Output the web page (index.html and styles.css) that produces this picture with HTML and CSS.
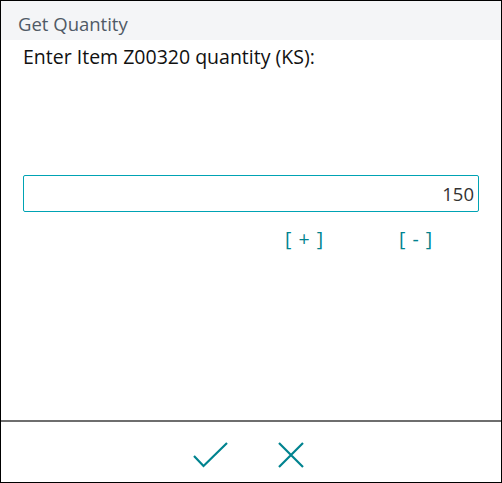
FILE: index.html
```html
<!DOCTYPE html>
<html lang="en">
<head>
  <meta charset="UTF-8">
  <meta name="viewport" content="width=device-width, initial-scale=1.0">
  <link rel="stylesheet" href="styles.css">
</head>
<body>
  <div class="dialog">
    <!-- header -->
    <div class="dialog-header">Get Quantity</div>

    <!-- body -->
    <div class="dialog-body">
      <div class="prompt">Enter Item Z00320 quantity (KS):</div>
      <input class="qty-input" type="text" value="150">
      <div class="step-row">
        <button class="step-btn">[ + ]</button>
        <button class="step-btn">[ - ]</button>
      </div>
    </div>

    <!-- footer -->
    <div class="dialog-footer">
      <button class="icon-btn" aria-label="OK">
        <svg width="35" height="26" viewBox="0 0 35 26">
          <path d="M1 14 L10.5 24 L34 1" fill="none" stroke="#00838f" stroke-width="2.2"/>
        </svg>
      </button>
      <button class="icon-btn" aria-label="Cancel">
        <svg width="26" height="26" viewBox="0 0 26 26">
          <path d="M1 1 L25 25 M25 1 L1 25" fill="none" stroke="#00838f" stroke-width="2.2"/>
        </svg>
      </button>
    </div>
  </div>
</body>
</html>
```

FILE: styles.css
```css
* {
  margin: 0;
  padding: 0;
  box-sizing: border-box;
}

body {
  width: 502px;
  height: 483px;
  font-family: "Open Sans", "Noto Sans", sans-serif;
  background: white;
}

.dialog {
  width: 502px;
  height: 483px;
  border: 1px solid #000;
  display: flex;
  flex-direction: column;
}

/* header */
.dialog-header {
  height: 39px;
  padding: 10px 0 0 17px;
  background: #f4f5f7;
  color: #505a66;
  font-size: 18.5px;
  line-height: 26px;
}

/* body */
.dialog-body {
  flex: 1;
  padding: 3px 22px 0 22px;
}

.prompt {
  font-size: 19.5px;
  line-height: 28px;
  color: #111;
}

.qty-input {
  display: block;
  width: 100%;
  height: 37px;
  margin-top: 104px;
  padding: 0 4px;
  border: 1px solid #00a3b4;
  border-radius: 2px;
  outline: none;
  text-align: right;
  font-family: inherit;
  font-size: 18.5px;
  color: #333;
}

.step-row {
  display: flex;
  margin-top: 14px;
  padding-left: 262px;
  gap: 76px;
}

.step-btn {
  background: none;
  border: none;
  font-family: inherit;
  font-size: 19.5px;
  line-height: 26px;
  word-spacing: 2px;
  color: #00838f;
  cursor: pointer;
}

/* footer */
.dialog-footer {
  height: 62px;
  border-top: 2px solid #6e6e6e;
  display: flex;
  justify-content: center;
  align-items: flex-start;
  padding: 20px 5px 0 0;
  gap: 50px;
}

.icon-btn {
  background: none;
  border: none;
  cursor: pointer;
  display: block;
}

.icon-btn svg {
  display: block;
}
```
